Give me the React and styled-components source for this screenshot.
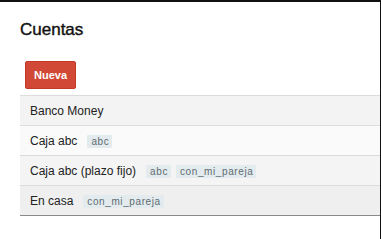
import React from 'react';
import styled, { createGlobalStyle } from 'styled-components';

const GlobalStyle = createGlobalStyle`
  html, body {
    margin: 0;
    padding: 0;
    background: #fff;
  }
  body {
    font-family: "Liberation Sans", Arial, sans-serif;
  }
`;

const Frame = styled.div`
  width: 380px;
  height: 237px;
  border-top: 2px solid #111;
  border-right: 1px solid #111;
  background: #fff;
  overflow: hidden;
`;

const Title = styled.h1`
  margin: 18px 0 0 20px;
  font-size: 17px;
  line-height: 20px;
  font-weight: normal;
  color: #111;
  -webkit-text-stroke: 0.4px #111;
`;

const Button = styled.button`
  display: block;
  margin: 21px 0 0 25px;
  height: 28px;
  padding: 0 8px;
  border: 1px solid #c53727;
  border-radius: 2px;
  background: #d14836;
  color: #fff;
  font-family: "Liberation Sans", Arial, sans-serif;
  font-size: 11px;
  font-weight: bold;
  cursor: pointer;
`;

const Table = styled.div`
  margin: 6px 0 0 20px;
  border-top: 1px solid #dcdcdc;
`;

const Row = styled.div`
  display: flex;
  align-items: center;
  gap: 5px;
  height: 29px;
  padding-left: 10px;
  background: ${(p) => p.bg};
  border-bottom: 1px solid ${(p) => (p.last ? '#8a8a8a' : '#dcdcdc')};
  font-size: 12px;
  color: #222;
`;

const Name = styled.span`
  margin-right: 5px;
`;

const Tag = styled.span`
  display: inline-block;
  height: 13px;
  line-height: 13px;
  margin-top: 2px;
  padding: 0 3px 0 4px;
  background: #e3ebee;
  border-radius: 1px;
  color: #5f6b70;
  font-family: "Liberation Sans", Arial, sans-serif;
  font-size: 10px;
  letter-spacing: 0.6px;
`;

const cuentas = [
  { name: 'Banco Money', tags: [], bg: '#f3f3f3' },
  { name: 'Caja abc', tags: ['abc'], bg: '#fafafa' },
  { name: 'Caja abc (plazo fijo)', tags: ['abc', 'con_mi_pareja'], bg: '#f4f4f4' },
  { name: 'En casa', tags: ['con_mi_pareja'], bg: '#efefef' },
];

const App = () => (
  <Frame>
    <GlobalStyle />
    <Title>Cuentas</Title>
    <Button>Nueva</Button>
    <Table>
      {cuentas.map((c, i) => (
        <Row key={c.name} bg={c.bg} last={i === cuentas.length - 1}>
          <Name>{c.name}</Name>
          {c.tags.map((t) => (
            <Tag key={t}>{t}</Tag>
          ))}
        </Row>
      ))}
    </Table>
  </Frame>
);

export default App;
